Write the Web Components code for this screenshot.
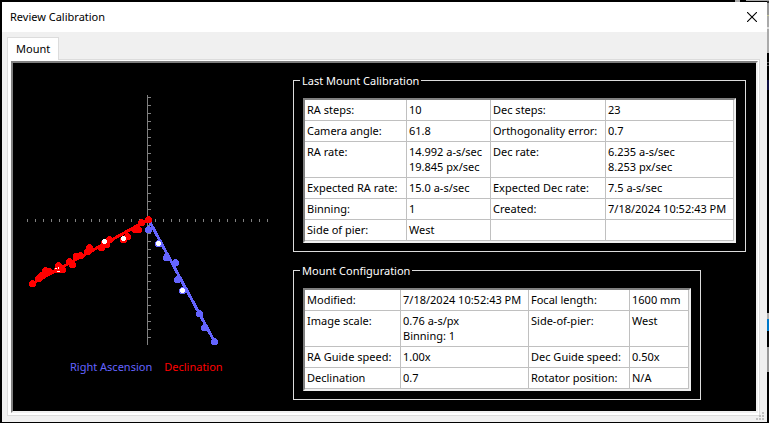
<!DOCTYPE html>
<html lang="en">
<head>
<meta charset="utf-8">
<title>Review Calibration</title>
<style>
	html {
		background: #000;
	}

	body {
		margin: 0;
		padding: 2px 2px 1px;
		box-sizing: border-box;
		min-height: 100vh;
		display: flex;
		font: 11px/15px "Noto Sans", "Open Sans", sans-serif;
		color: #000;
		/* slivers of the application behind the dialog */
		background:
			linear-gradient(#aaa, #aaa) right 29px top 0 / 5px 2px no-repeat,
			linear-gradient(#aaa, #aaa) right 0 top 0 / 23px 1px no-repeat,
			linear-gradient(#333 0 3px, #999 3px 15px, #c8c896 15px 16px, #aaa 16px 27px, #ddd 27px 29px, #aaa 29px 53px, #000 53px 62px, #555 62px 63px, #000 63px 65px, #555 65px 66px, #000 66px 80px, #114 80px 90px, #000 90px 313px, #aaa 313px 319px, #0078c8 319px 331px, #000 331px 347px, #999 347px 372px, #000 372px) right top / 2px 100% no-repeat,
			#000;
	}
</style>
</head>
<body>

<dialog-window heading="Review Calibration">
	<tab-page label="Mount">
		<calibration-plot></calibration-plot>
		<div slot="details">
			<group-box label="Last Mount Calibration">
				<value-grid source="calibration" columns="102 84 115 128"></value-grid>
			</group-box>
			<group-box label="Mount Configuration">
				<value-grid source="configuration" columns="96 128 101 59"></value-grid>
			</group-box>
		</div>
	</tab-page>
</dialog-window>

<script type="application/json" id="calibration">
[
	["RA steps:", "10", "Dec steps:", "23"],
	["Camera angle:", "61.8", "Orthogonality error:", "0.7"],
	["RA rate:", "14.992 a-s/sec\n19.845 px/sec", "Dec rate:", "6.235 a-s/sec\n8.253 px/sec"],
	["Expected RA rate:", "15.0 a-s/sec", "Expected Dec rate:", "7.5 a-s/sec"],
	["Binning:", "1", "Created:", "7/18/2024 10:52:43 PM"],
	["Side of pier:", "West", "", ""]
]
</script>
<script type="application/json" id="configuration">
[
	["Modified:", "7/18/2024 10:52:43 PM", "Focal length:", "1600 mm"],
	["Image scale:", "0.76 a-s/px\nBinning: 1", "Side-of-pier:", "West"],
	["RA Guide speed:", "1.00x", "Dec Guide speed:", "0.50x"],
	["Declination", "0.7", "Rotator position:", "N/A"]
]
</script>

<script>
// Attach an open shadow root and fill it from a template.
function attach(host, html) {
	const shadow = host.attachShadow({mode: 'open'});
	const template = document.createElement('template');
	template.innerHTML = html;
	shadow.appendChild(template.content.cloneNode(true));
	return shadow;
}

class DialogWindow extends HTMLElement {

	constructor() {
		super();
		attach(this, `
			<style>
			:host {
				position: relative;
				flex: 1;
				display: flex;
				flex-direction: column;
				background: #f0f0f0;
			}
			header {
				display: flex;
				align-items: center;
				justify-content: space-between;
				height: 30px;
				padding-left: 8px;
				background: #fff;
			}
			h1 {
				margin: 0;
				padding-bottom: 1px;
				font-size: 11px;
				font-weight: normal;
			}
			button {
				display: flex;
				padding: 10px;
				border: 0;
				background: none;
			}
			main {
				flex: 1;
				display: flex;
				padding: 5px 7px 6px 5px;
			}
			.grip {
				position: absolute;
				right: 3px;
				bottom: 2px;
			}
			</style>

			<header>
				<h1></h1>
				<button type="button" aria-label="Close">
					<svg width="10" height="10" viewBox="0 0 10 10" stroke="#000" stroke-width="1.1"><path d="M0 0 10 10M10 0 0 10"/></svg>
				</button>
			</header>
			<main><slot></slot></main>
			<svg class="grip" width="8" height="8" fill="#bfbfbf" aria-hidden="true"><path d="M6 0h2v2H6zM3 3h2v2H3zM6 3h2v2H6zM0 6h2v2H0zM3 6h2v2H3zM6 6h2v2H6z"/></svg>
		`);
	}

	connectedCallback() {
		this.shadowRoot.querySelector('h1').textContent = this.getAttribute('heading');
	}
}

class TabPage extends HTMLElement {

	constructor() {
		super();
		attach(this, `
			<style>
			:host {
				flex: 1;
				display: flex;
				flex-direction: column;
			}
			button {
				align-self: flex-start;
				z-index: 1;
				margin: 0 0 -1px;
				padding: 3px 8px 4px;
				border: 1px solid #dcdcdc;
				border-bottom: 0;
				background: #fff;
				font: inherit;
				color: #000;
			}
			section {
				flex: 1;
				display: flex;
				padding: 1px 1px 2px 3px;
				border: 1px solid #dcdcdc;
				background: #fff;
			}
			.panel {
				flex: 1;
				display: flex;
				border: 2px solid;
				border-color: #808080 #f0f0f0 #f0f0f0 #808080;
				background: #000;
			}
			::slotted([slot=details]) {
				display: flex;
				flex-direction: column;
				align-items: flex-start;
				gap: 10px;
				padding-top: 9px;
			}
			</style>

			<button type="button" role="tab" aria-selected="true"></button>
			<section>
				<div class="panel">
					<slot></slot>
					<slot name="details"></slot>
				</div>
			</section>
		`);
	}

	connectedCallback() {
		this.shadowRoot.querySelector('button').textContent = this.getAttribute('label');
	}
}

// Offsets from the origin of the plot.
const RA_POINTS = [[0, 10], [10, 24], [18, 38], [27, 43], [29, 60], [34, 71], [51, 94], [56, 108], [66, 122]];
const DEC_POINTS = [
	[-116, 64], [-110, 59], [-107, 56], [-103, 51], [-103, 54], [-99, 52], [-90, 46], [-91, 50],
	[-86, 50], [-79, 42], [-76, 45], [-72, 37], [-68, 36], [-61, 32], [-59, 28], [-47, 28], [-44, 23],
	[-42, 25], [-39, 20], [-25, 20], [-21, 17], [-13, 10], [-10, 10], [-7, 3], [0, 0]
];
const RETURN_POINTS = [[10, 24], [34, 71], [-44, 22], [-25, 19]];

class CalibrationPlot extends HTMLElement {

	constructor() {
		super();
		const dots = (points, r) => points.map(([x, y]) => `<circle cx="${x}" cy="${y}" r="${r}"/>`).join('');

		let ticks = '';
		for (let i = -15; i <= 15; i++) {
			ticks += `M${i * 8 - 1} -1v3M-1 ${i * 8 - 2}h3`;
		}

		attach(this, `
			<style>
			:host {
				flex: 0 0 280px;
			}
			svg {
				display: block;
			}
			.key {
				display: flex;
				gap: 12px;
				padding-left: 57px;
				line-height: 16px;
			}
			.ra {
				color: #6464ff;
			}
			.dec {
				color: #f00;
			}
			</style>

			<svg width="280" height="296" viewBox="0 0 280 296" shape-rendering="crispEdges" role="img" aria-label="Calibration steps">
				<g transform="translate(135.5 156.5)">
					<path stroke="#808080" d="M-1 -125v250${ticks}"/>
					<g fill="#6464ff">
						<path stroke="#6464ff" stroke-width="3" d="M0 0 66 122"/>
						${dots(RA_POINTS, 3.5)}
					</g>
					<g fill="#f00">
						<path stroke="#f00" stroke-width="3" d="M0 0-116 64"/>
						${dots(DEC_POINTS, 3.5)}
					</g>
					<g fill="#fff">
						${dots(RETURN_POINTS, 2.5)}
						<path d="M-94 48h2v1h-2zM-91 47h1v2h-1zM-92 51h3v1h-3z"/>
					</g>
				</g>
			</svg>
			<div class="key">
				<span class="ra">Right Ascension</span>
				<span class="dec">Declination</span>
			</div>
		`);
	}
}

class GroupBox extends HTMLElement {

	constructor() {
		super();
		attach(this, `
			<style>
			:host {
				display: block;
			}
			fieldset {
				margin: 0;
				padding: 9px 9px 8px;
				border: 1px solid #dcdcdc;
			}
			legend {
				margin-left: -3px;
				padding: 0 2px;
				line-height: 17px;
				color: #fff;
			}
			</style>

			<fieldset>
				<legend></legend>
				<slot></slot>
			</fieldset>
		`);
	}

	connectedCallback() {
		this.shadowRoot.querySelector('legend').textContent = this.getAttribute('label');
	}
}

class ValueGrid extends HTMLElement {

	constructor() {
		super();
		attach(this, `
			<style>
			:host {
				display: block;
			}
			table {
				border: 2px solid;
				border-color: #808080 #f0f0f0 #f0f0f0 #808080;
				border-spacing: 0;
				background: #fff;
			}
			th, td {
				box-sizing: border-box;
				height: 21px;
				padding: 2px 0 3px 2px;
				border: solid #c0c0c0;
				border-width: 0 1px 1px 0;
				font-weight: normal;
				text-align: left;
				vertical-align: top;
				white-space: pre;
			}
			</style>

			<table>
				<colgroup></colgroup>
				<tbody></tbody>
			</table>
		`);
	}

	connectedCallback() {
		const rows = JSON.parse(document.getElementById(this.getAttribute('source')).textContent);
		const widths = this.getAttribute('columns').split(' ');

		this.shadowRoot.querySelector('colgroup').innerHTML = widths.map(w => `<col style="width: ${w}px">`).join('');

		const body = this.shadowRoot.querySelector('tbody');
		for (const row of rows) {
			const tr = body.insertRow();
			row.forEach((text, i) => {
				// Labels sit in the even columns.
				const cell = document.createElement(i % 2 || !text ? 'td' : 'th');
				if (cell.tagName === 'TH') cell.scope = 'row';
				cell.textContent = text;
				tr.appendChild(cell);
			});
		}
	}
}

customElements.define('dialog-window', DialogWindow);
customElements.define('tab-page', TabPage);
customElements.define('calibration-plot', CalibrationPlot);
customElements.define('group-box', GroupBox);
customElements.define('value-grid', ValueGrid);
</script>
</body>
</html>
